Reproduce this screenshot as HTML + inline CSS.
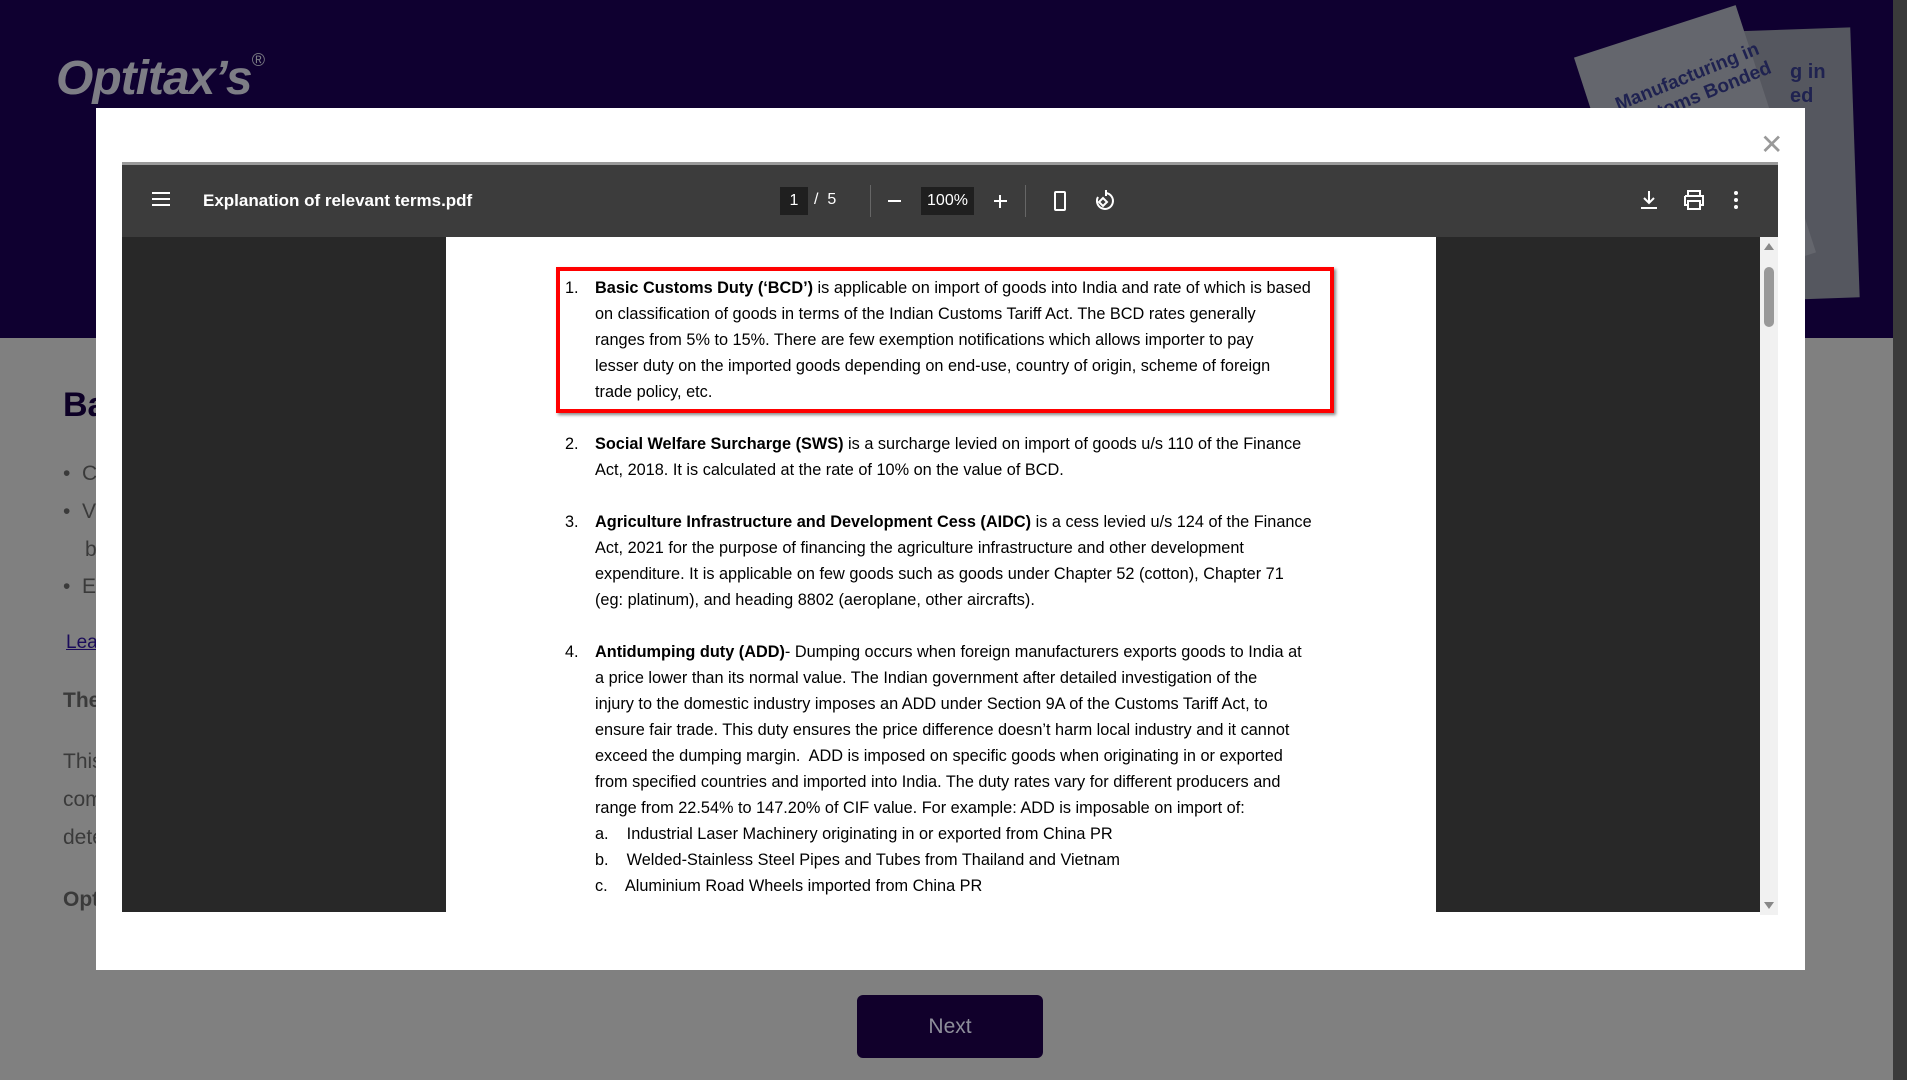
<!DOCTYPE html>
<html><head><meta charset="utf-8"><style>
*{margin:0;padding:0;box-sizing:border-box}
body{width:1907px;height:1080px;overflow:hidden;background:#808080;position:relative;font-family:"Liberation Sans",sans-serif}
.hdr{position:absolute;left:0;top:0;width:1893px;height:338px;background:#0f0030;overflow:hidden}
.logo{position:absolute;left:56px;top:50px;font:italic bold 48px "Liberation Sans",sans-serif;color:#7d7d85;letter-spacing:-1px}
.logo sup{font-size:18px;font-weight:normal;vertical-align:28px}
.bk{position:absolute}
.bg{position:absolute;color:#3a3a3a;font-size:21px}
.modal{position:absolute;left:96px;top:108px;width:1709px;height:862px;background:#fff}
.x{position:absolute;left:1760px;top:128px;font-size:28px;color:#999;font-weight:300}
.viewer{position:absolute;left:122px;top:162px;width:1656px;height:750px;background:#282828;border-top:3px solid #9a9a9a}
.tb{position:absolute;left:0;top:0;width:1656px;height:72px;background:#3c3c3c;color:#fff}
.tb div{position:absolute}
.page{position:absolute;left:324px;top:72px;width:990px;height:678px;background:#fff;overflow:hidden;font-size:16.3px;color:#000;line-height:26px}
.sb{position:absolute;left:1638px;top:72px;width:18px;height:678px;background:#f1f1f1}
.it{position:absolute;left:149px;white-space:nowrap}
.n{position:absolute;left:-30px}
b{font-weight:bold}
.next{position:absolute;left:857px;top:995px;width:186px;height:63px;background:#11002b;border-radius:6px;color:#8e8e9a;font-size:21px;text-align:center;line-height:63px}
</style></head><body>
<div class="hdr">
 <div class="logo">Optitax’s<sup>®</sup></div>
 <div class="bk" style="left:1700px;top:30px;width:155px;height:270px;transform:rotate(-2deg);background:#55575f"></div>
 <div class="bk" style="left:1610px;top:25px;width:170px;height:260px;transform:rotate(-18deg);background:#64666d"></div>
 <div style="position:absolute;left:1615px;top:65px;transform:rotate(-22deg);color:#1f2250;font:bold 19px 'Liberation Sans',sans-serif;line-height:22px">Manufacturing in<br>Customs Bonded</div>
 <div style="position:absolute;left:1790px;top:60px;color:#1f2250;font:bold 20px 'Liberation Sans',sans-serif;line-height:24px">g in<br>ed</div>
</div>
<div style="position:absolute;left:1893px;top:0;width:14px;height:1080px;background:#3a3a3a"></div>
<div class="bg" style="left:63px;top:386px;font-size:34px;font-weight:bold;color:#0d0026">Ba</div>
<div class="bg" style="left:63px;top:462px">•&nbsp; C</div>
<div class="bg" style="left:63px;top:500px">•&nbsp; V</div>
<div class="bg" style="left:85px;top:538px">b</div>
<div class="bg" style="left:63px;top:575px">•&nbsp; E</div>
<div class="bg" style="left:66px;top:632px;color:#1a0b5a;text-decoration:underline;font-size:19px">Lea</div>
<div class="bg" style="left:63px;top:689px;font-weight:bold">The</div>
<div class="bg" style="left:63px;top:750px">This</div>
<div class="bg" style="left:63px;top:788px">com</div>
<div class="bg" style="left:63px;top:826px">dete</div>
<div class="bg" style="left:63px;top:888px;font-weight:bold">Opt</div>

<div class="modal"></div>
<div class="x">✕</div>
<div class="viewer">
 <div class="tb">
  <div style="left:30px;top:27px;width:18px;height:14px;border-top:2px solid #fff;border-bottom:2px solid #fff"><div style="left:0;top:4px;width:18px;height:2px;background:#fff"></div></div>
  <div style="left:81px;top:26px;font-size:17px;font-weight:bold">Explanation of relevant terms.pdf</div>
  <div style="left:658px;top:22px;width:28px;height:28px;background:#1f1f1f;text-align:center;line-height:28px;font-size:16px">1</div>
  <div style="left:692px;top:26px;font-size:16px">/&nbsp; 5</div>
  <div style="left:748px;top:20px;width:1px;height:32px;background:#666"></div>
  <div style="left:766px;top:35px;width:13px;height:2px;background:#fff"></div>
  <div style="left:799px;top:22px;width:53px;height:28px;background:#1f1f1f;text-align:center;line-height:28px;font-size:16px">100%</div>
  <div style="left:872px;top:35px;width:13px;height:2px;background:#fff"></div>
  <div style="left:877px;top:30px;width:2px;height:13px;background:#fff"></div>
  <div style="left:903px;top:20px;width:1px;height:32px;background:#666"></div>
  <div style="left:932px;top:26px;width:12px;height:20px;border:2px solid #fff;border-radius:2px"></div>
  <svg style="position:absolute;left:970px;top:24px" width="24" height="24" viewBox="0 0 24 24" fill="none" stroke="#fff" stroke-width="2"><path d="M14 4a8 8 0 1 1-8 4"/><path d="M14 1v6"/><path d="M7 13l4-4 4 4-4 4z"/></svg>
  <svg style="position:absolute;left:1516px;top:24px" width="22" height="22" viewBox="0 0 22 22" fill="none" stroke="#fff" stroke-width="2"><path d="M11 2v12M6 9l5 5 5-5M3 19h16"/></svg>
  <svg style="position:absolute;left:1560px;top:24px" width="24" height="22" viewBox="0 0 24 22" fill="none" stroke="#fff" stroke-width="2"><path d="M6 7V2h12v5M3 7h18v9h-3M6 16H3V7M6 12h12v8H6z"/></svg>
  <div style="left:1612px;top:26px;width:4px;height:4px;background:#fff;border-radius:2px;box-shadow:0 7px 0 #fff,0 14px 0 #fff"></div>
 </div>
 <div class="page">
  <div style="position:absolute;left:110px;top:30px;width:778px;height:146px;border:4px solid #f00;box-shadow:2px 2px 3px #888"></div>
  <div class="it" style="top:38px"><span class="n">1.</span><b>Basic Customs Duty (‘BCD’)</b> is applicable on import of goods into India and rate of which is based<br>on classification of goods in terms of the Indian Customs Tariff Act. The BCD rates generally<br>ranges from 5% to 15%. There are few exemption notifications which allows importer to pay<br>lesser duty on the imported goods depending on end-use, country of origin, scheme of foreign<br>trade policy, etc.</div>
  <div class="it" style="top:194px"><span class="n">2.</span><b>Social Welfare Surcharge (SWS)</b> is a surcharge levied on import of goods u/s 110 of the Finance<br>Act, 2018. It is calculated at the rate of 10% on the value of BCD.</div>
  <div class="it" style="top:272px"><span class="n">3.</span><b>Agriculture Infrastructure and Development Cess (AIDC)</b> is a cess levied u/s 124 of the Finance<br>Act, 2021 for the purpose of financing the agriculture infrastructure and other development<br>expenditure. It is applicable on few goods such as goods under Chapter 52 (cotton), Chapter 71<br>(eg: platinum), and heading 8802 (aeroplane, other aircrafts).</div>
  <div class="it" style="top:402px"><span class="n">4.</span><b>Antidumping duty (ADD)</b>- Dumping occurs when foreign manufacturers exports goods to India at<br>a price lower than its normal value. The Indian government after detailed investigation of the<br>injury to the domestic industry imposes an ADD under Section 9A of the Customs Tariff Act, to<br>ensure fair trade. This duty ensures the price difference doesn’t harm local industry and it cannot<br>exceed the dumping margin.&nbsp; ADD is imposed on specific goods when originating in or exported<br>from specified countries and imported into India. The duty rates vary for different producers and<br>range from 22.54% to 147.20% of CIF value. For example: ADD is imposable on import of:<br>a.&nbsp;&nbsp;&nbsp; Industrial Laser Machinery originating in or exported from China PR<br>b.&nbsp;&nbsp;&nbsp; Welded-Stainless Steel Pipes and Tubes from Thailand and Vietnam<br>c.&nbsp;&nbsp;&nbsp; Aluminium Road Wheels imported from China PR</div>
 </div>
 <div class="sb">
  <div style="position:absolute;left:4px;top:6px;border:5px solid transparent;border-bottom:7px solid #888;border-top:0"></div>
  <div style="position:absolute;left:4px;top:30px;width:10px;height:60px;background:#999;border-radius:5px"></div>
  <div style="position:absolute;left:4px;bottom:6px;border:5px solid transparent;border-top:7px solid #888;border-bottom:0"></div>
 </div>
</div>
<div class="next">Next</div>
</body></html>
